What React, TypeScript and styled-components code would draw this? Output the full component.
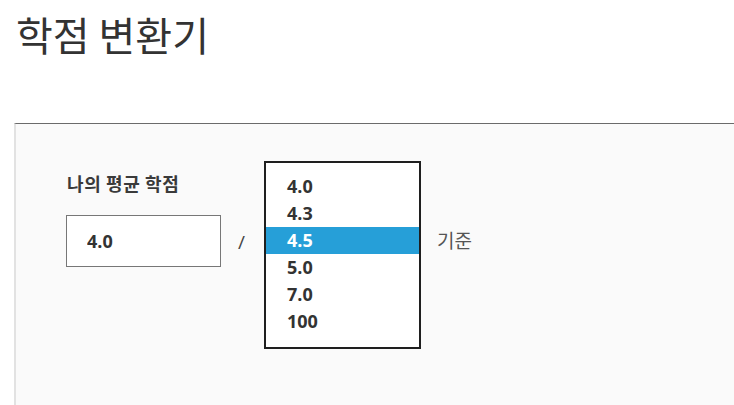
import styled, { createGlobalStyle } from "styled-components";

const GlobalStyle = createGlobalStyle`
  html, body {
    margin: 0;
    padding: 0;
    background: #ffffff;
    font-family: "Open Sans", "Noto Sans CJK KR", sans-serif;
    color: #333333;
  }
`;

const Page = styled.div`
  width: 734px;
  height: 405px;
  overflow: hidden;
`;

const Title = styled.h1`
  margin: 0;
  padding: 8px 0 0 16px;
  height: 123px;
  box-sizing: border-box;
  font-family: "Noto Sans CJK KR", sans-serif;
  font-size: 40px;
  font-weight: 400;
  line-height: 52px;
  color: #333333;
`;

const Panel = styled.section`
  margin-left: 14px;
  height: 282px;
  background: #fafafa;
  border-top: 1px solid #6b6b6b;
  border-left: 2px solid #e2e2e2;
  padding: 37px 0 0 50px;
  box-sizing: border-box;
`;

const Row = styled.div`
  display: flex;
  align-items: flex-start;
`;

const Field = styled.div`
  display: flex;
  flex-direction: column;
`;

const Label = styled.label`
  margin-top: 10px;
  padding-left: 1px;
  font-family: "Noto Sans CJK KR", sans-serif;
  font-size: 18px;
  font-weight: 700;
  letter-spacing: 0.6px;
  line-height: 24px;
  color: #3a3a3a;
`;

const Input = styled.input`
  margin-top: 20px;
  width: 155px;
  height: 52px;
  box-sizing: border-box;
  border: 1px solid #777777;
  background: #ffffff;
  padding: 0 0 0 20px;
  font-family: "Open Sans", sans-serif;
  font-size: 18px;
  font-weight: 700;
  color: #333333;
  outline: none;
`;

const Slash = styled.span`
  margin: 69px 19px 0 17px;
  font-family: "Open Sans", sans-serif;
  font-size: 19px;
  line-height: 24px;
  color: #444444;
`;

const List = styled.ul`
  list-style: none;
  margin: 0;
  width: 157px;
  height: 188px;
  box-sizing: border-box;
  border: 2px solid #1f1f1f;
  background: #ffffff;
  padding: 10px 0 0;
`;

const Option = styled.li<{ $selected?: boolean }>`
  height: 27px;
  padding-left: 21px;
  font-family: "Open Sans", sans-serif;
  font-size: 18px;
  font-weight: 700;
  line-height: 27px;
  color: ${(p) => (p.$selected ? "#ffffff" : "#333333")};
  background: ${(p) => (p.$selected ? "#269fd8" : "transparent")};
`;

const Unit = styled.span`
  margin: 66px 0 0 16px;
  font-family: "Noto Sans CJK KR", sans-serif;
  font-size: 19px;
  line-height: 26px;
  color: #555555;
`;

const scales = ["4.0", "4.3", "4.5", "5.0", "7.0", "100"];

const App = () => {
  return (
    <Page>
      <GlobalStyle />
      <Title>학점 변환기</Title>
      <Panel>
        <Row>
          <Field>
            <Label htmlFor="gpa">나의 평균 학점</Label>
            <Input id="gpa" defaultValue="4.0" />
          </Field>
          <Slash>/</Slash>
          <List role="listbox">
            {scales.map((s) => (
              <Option key={s} role="option" $selected={s === "4.5"}>
                {s}
              </Option>
            ))}
          </List>
          <Unit>기준</Unit>
        </Row>
      </Panel>
    </Page>
  );
};

export default App;
